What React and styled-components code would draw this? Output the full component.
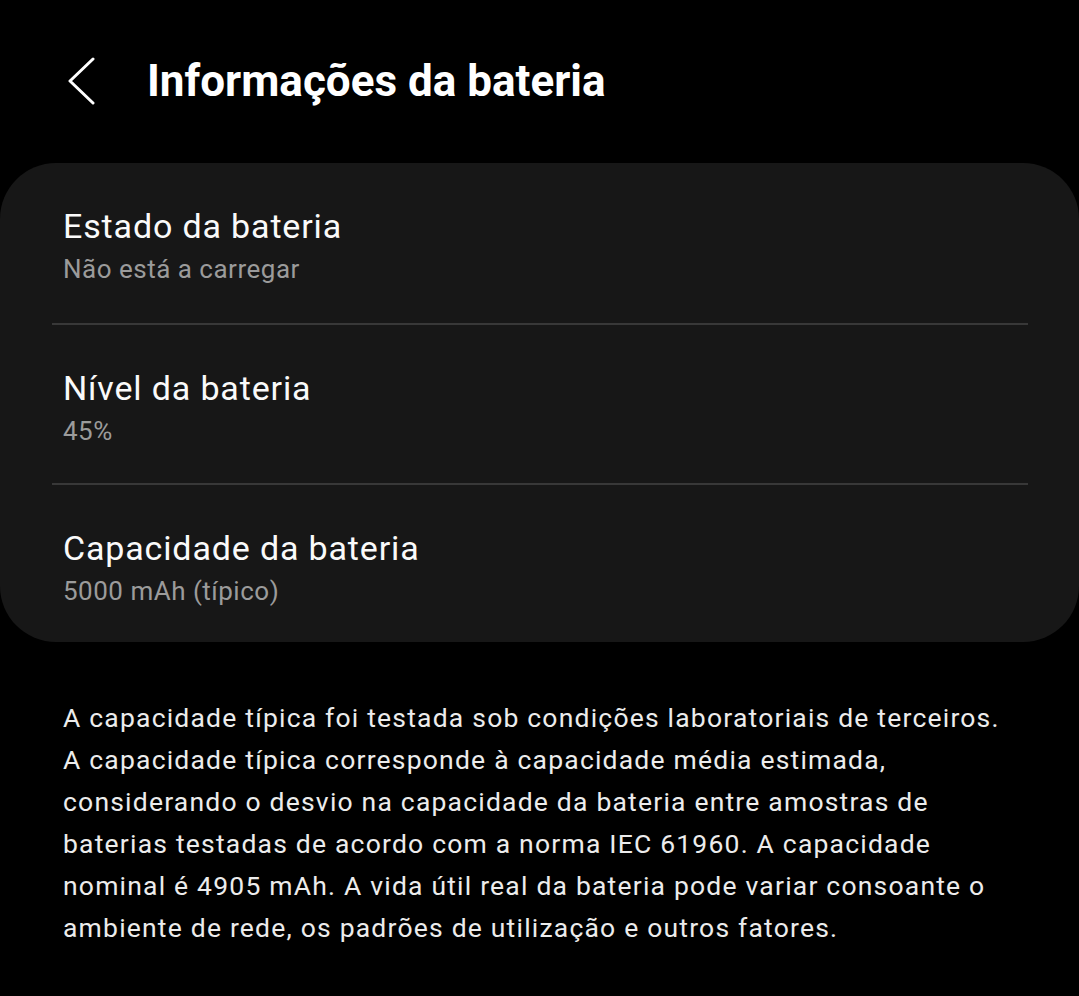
import React from "react";
import styled, { createGlobalStyle } from "styled-components";

const Global = createGlobalStyle`
  html, body { margin: 0; padding: 0; background: #000; }
  body { font-family: Roboto, "Noto Sans", sans-serif; color: #fff; }
`;

const Page = styled.div`
  width: 1079px;
  min-height: 996px;
  background: #000;
  display: flex;
  flex-direction: column;
`;

const Header = styled.header`
  display: flex;
  align-items: center;
  height: 163px;
  padding-left: 66px;
  box-sizing: border-box;
  padding-bottom: 2px;
`;

const BackButton = styled.button`
  background: none;
  border: none;
  padding: 0;
  width: 34px;
  height: 50px;
  display: flex;
  align-items: center;
  justify-content: flex-start;
  cursor: pointer;
`;

const Title = styled.h1`
  margin: 0 0 0 47px;
  font-size: 44px;
  font-weight: 700;
  letter-spacing: 0;
  color: #fff;
`;

const Card = styled.section`
  background: #171717;
  border-radius: 56px;
  padding: 0 51px 0 52px;
  display: flex;
  flex-direction: column;
`;

const Row = styled.div`
  height: ${(p) => p.$h}px;
  box-sizing: border-box;
  display: flex;
  flex-direction: column;
  padding: 43px 0 0 11px;
  border-bottom: ${(p) => (p.$last ? "none" : "2px solid #383838")};
`;

const RowTitle = styled.div`
  font-size: 34px;
  letter-spacing: 0.85px;
  color: #fafafa;
  line-height: 40px;
`;

const RowValue = styled.div`
  margin-top: 5px;
  font-size: 26px;
  letter-spacing: 0.5px;
  color: #9b9b9b;
  line-height: 36px;
`;

const Note = styled.p`
  margin: 55px 0 0 63px;
  width: 955px;
  font-size: 26.5px;
  letter-spacing: 1.2px;
  line-height: 42px;
  color: #ececec;
`;

const rows = [
  { t: "Estado da bateria", v: "Não está a carregar", h: 162 },
  { t: "Nível da bateria", v: "45%", h: 160 },
  { t: "Capacidade da bateria", v: "5000 mAh (típico)", h: 157 },
];

export default function App() {
  return (
    <Page>
      <Global />
      <Header>
        <BackButton aria-label="Voltar">
          <svg width="30" height="48" viewBox="0 0 30 48" fill="none">
            <path d="M27 2 L4 24 L27 46" stroke="#fff" strokeWidth="3" strokeLinecap="round" strokeLinejoin="round" />
          </svg>
        </BackButton>
        <Title>Informações da bateria</Title>
      </Header>
      <Card>
        {rows.map((r, i) => (
          <Row key={r.t} $h={r.h} $last={i === rows.length - 1}>
            <RowTitle>{r.t}</RowTitle>
            <RowValue>{r.v}</RowValue>
          </Row>
        ))}
      </Card>
      <Note>
        A capacidade típica foi testada sob condições laboratoriais de terceiros.
        A capacidade típica corresponde à capacidade média estimada,
        considerando o desvio na capacidade da bateria entre amostras de
        baterias testadas de acordo com a norma IEC 61960. A capacidade
        nominal é 4905 mAh. A vida útil real da bateria pode variar consoante o
        ambiente de rede, os padrões de utilização e outros fatores.
      </Note>
    </Page>
  );
}
